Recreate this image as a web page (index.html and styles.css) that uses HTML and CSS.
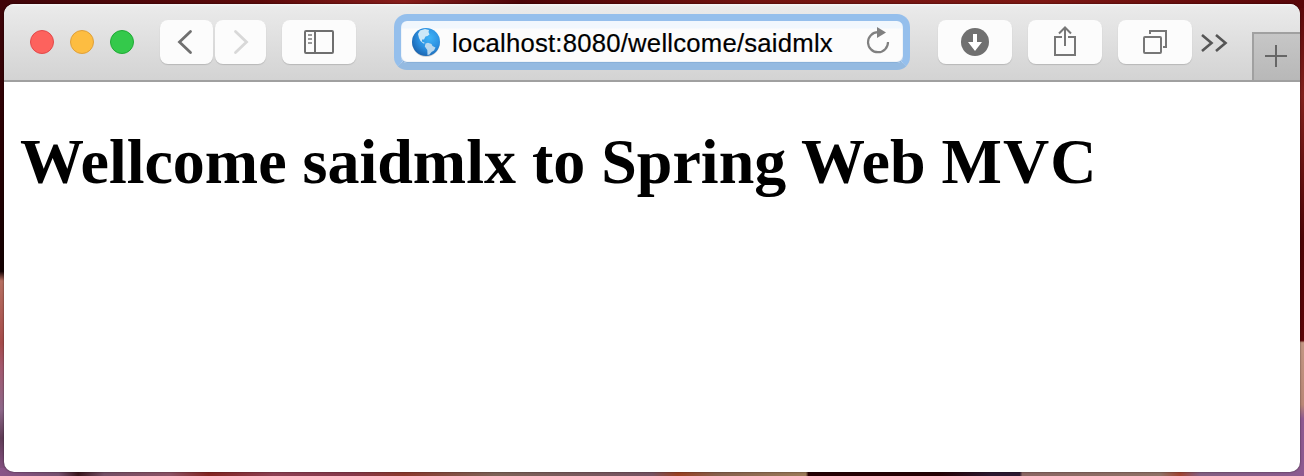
FILE: index.html
```html
<!DOCTYPE html>
<html lang="en">
<head>
<meta charset="utf-8">
<title>Wellcome</title>
<link rel="stylesheet" href="styles.css">
</head>
<body class="desktop">
<div class="window">
  <header class="toolbar">
    <div class="lights">
      <span class="light close"></span>
      <span class="light minimize"></span>
      <span class="light zoom"></span>
    </div>
    <div class="history">
      <button class="btn back" aria-label="Back"><svg width="53" height="44" viewBox="0 0 53 44"><path d="M30.500 11.500 19.500 22 30.500 32.500" fill="none" stroke="#707070" stroke-width="2.8" stroke-linecap="round"/></svg></button>
      <button class="btn forward" aria-label="Forward"><svg width="51" height="44" viewBox="0 0 51 44"><path d="M20.500 11.500 31.500 22 20.500 32.500" fill="none" stroke="#d8d8d8" stroke-width="2.800" stroke-linecap="round"/></svg></button>
    </div>
    <button class="btn sidebar" aria-label="Sidebar"><svg width="74" height="44" viewBox="0 0 74 44"><g fill="none" stroke="#6f6f6f" stroke-width="2"><rect x="23" y="11" width="28" height="22" rx="1"/><path d="M33 11v22"/></g><path d="M26 15h4M26 19h4M26 23h4" stroke="#999" stroke-width="2"/></svg></button>
    <div class="address">
      <svg class="globe" width="32" height="34" viewBox="0 0 32 34">
        <defs><radialGradient id="sea" cx=".62" cy=".35" r=".72"><stop offset="0" stop-color="#3fb4f8"/><stop offset=".55" stop-color="#2b8fe0"/><stop offset="1" stop-color="#1a61ab"/></radialGradient><clipPath id="ball"><circle cx="16" cy="16" r="14"/></clipPath></defs>
        <ellipse cx="16" cy="17.500" rx="13.500" ry="13.500" fill="#777" opacity=".3"/>
        <circle cx="16" cy="16" r="14" fill="url(#sea)"/>
        <g clip-path="url(#ball)">
          <path d="M8 8 10 4.500l5-1.500 4 1-.5 2 1 2.500-2 1.500-2 .5-1.500 3h-2v2l3 1.500-1.500.5-3-2.500-1.500-3z" fill="#cbe8f8"/>
          <path d="M15.500 17.500 18 16.700l3.500 1.300 1 2 3 1.500-1.500 3-2.500 1.500-2 2.500-2 .5-.2-5-2.500-3.500z" fill="#b9d8ee"/>
        </g>
      </svg>
      <span class="url">localhost:8080/wellcome/saidmlx</span>
      <svg class="reload" width="28" height="32" viewBox="0 0 28 32"><path d="M14 7.200A10 10 0 1 0 24 17" fill="none" stroke="#808080" stroke-width="2.200"/><path d="M13 2v11l9-5.500z" fill="#808080"/></svg>
    </div>
    <div class="actions">
      <button class="btn" aria-label="Downloads"><svg width="74" height="44" viewBox="0 0 74 44"><circle cx="37" cy="22" r="14" fill="#707070"/><path d="M35 14h4v8h5l-7 9-7-9h5z" fill="#fff"/></svg></button>
      <button class="btn" aria-label="Share"><svg width="74" height="44" viewBox="0 0 74 44"><path d="M34 17h-7v18h20V17h-7M37 26V8M31 13.500 37 7.500l6 6" fill="none" stroke="#777" stroke-width="2"/></svg></button>
      <button class="btn" aria-label="Tabs"><svg width="74" height="44" viewBox="0 0 74 44"><g fill="none" stroke="#777" stroke-width="2"><rect x="26" y="17" width="17" height="16" rx="1"/><path d="M32 14v-3h16v16h-3"/></g></svg></button>
    </div>
    <svg class="more" width="28" height="20" viewBox="0 0 28 20"><path d="m2 2 9.500 8L2 18M16 2l9.500 8-9.500 8" fill="none" stroke="#555" stroke-width="2.600"/></svg>
    <button class="new-tab" aria-label="New tab"><svg width="22" height="22" viewBox="0 0 22 22"><path d="M0 11h22M11 0v22" stroke="#666" stroke-width="2"/></svg></button>
  </header>
  <main class="page">
    <h1 class="title">Wellcome saidmlx to Spring Web <span class="acronym">MVC</span></h1>
  </main>
</div>
</body>
</html>
```
FILE: styles.css
```css
* { box-sizing: border-box; }

.desktop {
  margin: 0;
  height: 476px;
  padding: 4px;
  overflow: hidden;
  background:
    linear-gradient(90deg, #400408, #5c0909 20%, #871c1a 31%, #4c0306 40%, #72130f 58%, #7d1713 80%, #580508) 0 0 / 100% 8px no-repeat,
    linear-gradient(90deg, #8a5488, #76506f 4.500%, #3a151c 6%, #754f66 8%, #8c5265 13%, #842420 16%, #8e4053 21%, #87384a 27%, #8c392c 31%, #7d6257 38%, #765262 50%, #9b4020 52%, #87604c 55%, #9b7a58 61.800%, #250003 62%, #250003 72%, #2b1830 76%, #2b1830 78.200%, #8b6663 78.400%, #8f7166 89%, #a14330 90.500%, #846083 92%, #8c5a90) 0 100% / 100% 8px no-repeat,
    linear-gradient(#400408, #210002 40%, #120001 57%, #b66f61 59%, #a54b4a 72%, #a3586d 77%, #8d6789 86%, #5f3c56 92%, #8a5488) 0 0 / 8px 100% no-repeat,
    linear-gradient(#580508, #81201c 20%, #4b0305 50%, #5c0508 71.500%, #c39783 72%, #b98776 85%, #8e5a91 88%, #8c5a90) 100% 0 / 8px 100% no-repeat,
    #400408;
}

.window {
  display: flex;
  flex-direction: column;
  height: 468px;
  overflow: hidden;
  border-radius: 10px;
  background: #fff;
  box-shadow: 0 0 2px rgba(0, 0, 0, .65);
}

.toolbar {
  display: flex;
  flex: none;
  align-items: flex-start;
  height: 78px;
  padding-left: 26px;
  border-bottom: 2px solid #a0a0a0;
  background: linear-gradient(#f5f5f5, #eaeaea 3px, #d3d3d3);
}

.lights {
  display: flex;
  gap: 16px;
  width: 130px;
  padding-top: 26px;
}

.light {
  width: 24px;
  height: 24px;
  border: 1px solid;
  border-radius: 50%;
}

.close { border-color: #e2494a; background: #fd625d; }
.minimize { border-color: #dfa03b; background: #fdbd41; }
.zoom { border-color: #20aa35; background: #34c94b; }

.history {
  display: flex;
  gap: 2px;
  margin-right: 16px;
}

.btn {
  width: 74px;
  height: 44px;
  margin: 16px 0 0;
  padding: 0;
  border: 0;
  border-radius: 8px;
  background: #fcfcfc;
  box-shadow: 0 1px 1px #b9b9b9;
}

.btn svg { display: block; }
.back { width: 53px; }
.forward { width: 51px; }

.address {
  display: flex;
  align-items: center;
  width: 516px;
  height: 56px;
  margin: 10px 28px 0 38px;
  padding: 0 11px 0 9px;
  border: 7px solid #95bfec;
  border-bottom-color: #94bae1;
  border-radius: 13px;
  background: linear-gradient(#f1f7fd 0 7px, #fcfcfc 8px);
  box-shadow: inset 0 -1px 1px #7ca8d5;
}

.globe {
  flex: none;
  margin-top: 2px;
}

.url {
  width: 384px;
  margin: 2px 0 0 10px;
  color: #000;
  font: 25.700px/42px "Liberation Sans", Arial, sans-serif;
  letter-spacing: .22px;
  white-space: nowrap;
  -webkit-text-stroke: .2px #000;
}

.reload { margin: -3px 0 0 auto; }

.actions {
  display: flex;
  gap: 16px;
}

.more { margin: 29px 0 0 8px; }

.new-tab {
  display: flex;
  align-items: flex-start;
  width: 48px;
  height: 48px;
  margin: 28px 0 0 auto;
  padding: 11px 0 0 11px;
  border: solid #a0a0a0;
  border-width: 2px 0 0 2px;
  background: linear-gradient(#c6c6c6, #b8b8b8);
}

.page { padding: 0 16px; }

.title {
  margin: 43px 0;
  color: #000;
  font: bold 64px/74px "Liberation Serif", "Times New Roman", serif;
  white-space: nowrap;
}

.acronym { letter-spacing: 1px; }
```
